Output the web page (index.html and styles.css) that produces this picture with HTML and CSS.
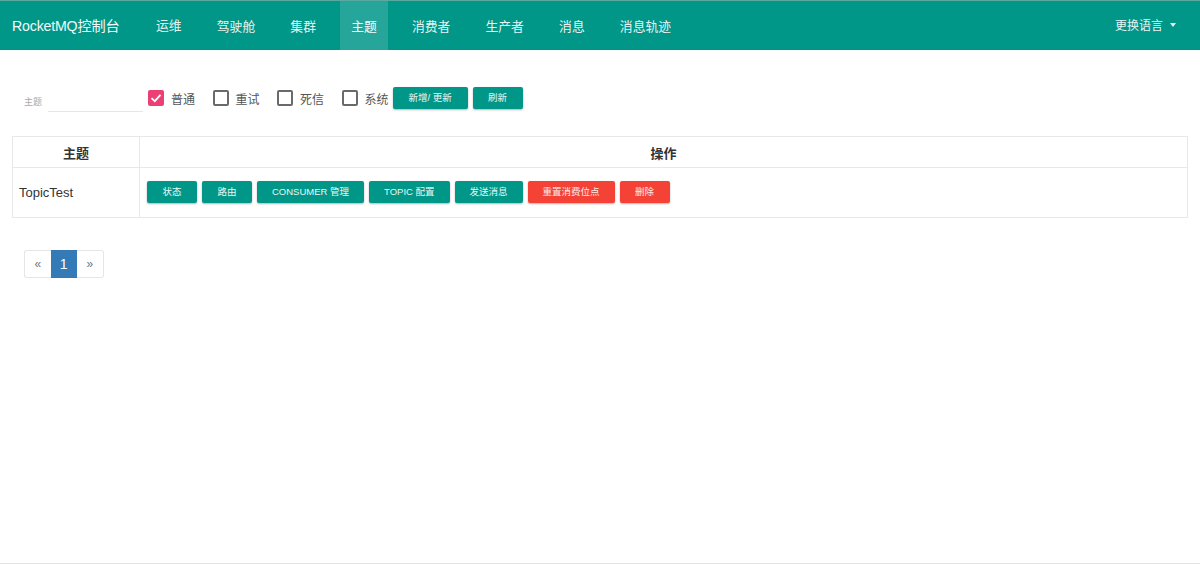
FILE: index.html
```html
<!DOCTYPE html>
<html lang="zh">
<head>
<meta charset="utf-8">
<title>RocketMQ控制台</title>
<link rel="stylesheet" href="styles.css">
</head>
<body>
<div class="page">
  <nav class="navbar">
    <div class="brand">RocketMQ控制台</div>
    <ul class="nav">
      <li class="nav-item">运维</li>
      <li class="nav-item">驾驶舱</li>
      <li class="nav-item">集群</li>
      <li class="nav-item active">主题</li>
      <li class="nav-item">消费者</li>
      <li class="nav-item">生产者</li>
      <li class="nav-item">消息</li>
      <li class="nav-item">消息轨迹</li>
    </ul>
    <div class="lang">更换语言 <span class="caret"></span></div>
  </nav>

  <main class="content">
    <div class="filter">
      <div class="field">
        <span class="field-label">主题</span>
        <span class="field-input"></span>
      </div>
      <label class="check"><span class="box checked"><svg viewBox="0 0 16 16" width="16" height="16"><path d="M3.5 8.2 L6.8 11.2 L12.5 4.8" fill="none" stroke="#fff" stroke-width="1.8"/></svg></span><span class="check-text">普通</span></label>
      <label class="check"><span class="box"></span><span class="check-text">重试</span></label>
      <label class="check"><span class="box"></span><span class="check-text">死信</span></label>
      <label class="check"><span class="box"></span><span class="check-text">系统</span></label>
      <button class="btn btn-form wide">新增/ 更新</button>
      <button class="btn btn-form">刷新</button>
    </div>

    <table class="grid">
      <thead>
        <tr><th class="col-topic">主题</th><th>操作</th></tr>
      </thead>
      <tbody>
        <tr>
          <td class="topic">TopicTest</td>
          <td>
            <div class="actions">
              <button class="btn">状态</button>
              <button class="btn">路由</button>
              <button class="btn">CONSUMER 管理</button>
              <button class="btn">TOPIC 配置</button>
              <button class="btn">发送消息</button>
              <button class="btn btn-red">重置消费位点</button>
              <button class="btn btn-red">删除</button>
            </div>
          </td>
        </tr>
      </tbody>
    </table>

    <ul class="pager">
      <li class="pg">«</li>
      <li class="pg current">1</li>
      <li class="pg">»</li>
    </ul>
  </main>
</div>
</body>
</html>
```

FILE: styles.css
```css
* { box-sizing: border-box; }
html, body { margin: 0; padding: 0; background: #fff; }
body {
  font-family: "Liberation Sans", "Noto Sans CJK SC", Arial, sans-serif;
  font-size: 13px;
  color: #333;
}
.page {
  min-height: 564px;
  border-bottom: 1px solid #e2e2e2;
}
.navbar {
  height: 50px;
  background: #009688;
  border-top: 1px solid #5aa9a1;
  display: flex;
  align-items: stretch;
  color: #e8f5f3;
}
.brand {
  display: flex;
  align-items: center;
  padding-left: 12px;
  padding-bottom: 2px;
  width: 145px;
  font-size: 14.2px;
  color: #f2faf9;
  letter-spacing: -0.2px;
}
.nav {
  list-style: none;
  margin: 0;
  padding: 0;
  display: flex;
  flex: 1;
}
.nav-item {
  display: flex;
  align-items: center;
  padding: 0 11px 1px;
  margin-right: 13.2px;
  font-size: 12.8px;
  color: #e6f4f2;
}
.nav-item:first-child { padding-bottom: 3px; }
.nav-item.active {
  background: #26a69a;
  color: #f4fbfa;
}
.lang {
  display: flex;
  align-items: center;
  padding-right: 24px;
  padding-bottom: 2px;
  font-size: 12px;
  color: #e6f4f2;
}
.caret {
  display: inline-block;
  width: 0; height: 0;
  margin-left: 7px;
  border-left: 3px solid transparent;
  border-right: 3px solid transparent;
  border-top: 4px solid #e6f4f2;
}
.content {
  padding: 36px 12px 0;
}
.filter {
  display: flex;
  align-items: center;
  height: 24px;
  padding-left: 12px;
  margin-bottom: 26px;
}
.field {
  display: flex;
  align-items: flex-end;
  height: 24px;
  margin-right: 5px;
}
.field-label {
  font-size: 9px;
  color: #aaa;
  margin-right: 6px;
  padding-bottom: 2px;
}
.field-input {
  width: 95px;
  height: 1px;
  background: #e6e6e6;
  margin-bottom: -2px;
}
.check {
  display: flex;
  align-items: center;
  margin-right: 17.5px;
  color: #555;
}
.check:nth-of-type(4) { margin-right: 0; }
.box {
  width: 16px;
  height: 16px;
  border: 2px solid #6a6a6a;
  border-radius: 2px;
  margin-right: 7px;
  display: flex;
  align-items: center;
  justify-content: center;
}
.box.checked {
  background: #ec3f74;
  border-color: #ec3f74;
}
.box svg { display: block; flex: none; }
.check-text { font-size: 12px; }
.btn {
  font-family: inherit;
  height: 22px;
  padding: 0 15px;
  border: 0;
  border-radius: 2px;
  background: #009688;
  color: #e8f6f4;
  font-size: 9.5px;
  line-height: 22px;
  white-space: nowrap;
  box-shadow: 0 1px 2px rgba(0,0,0,0.3);
}
.btn-red { background: #f44336; color: #fde9e7; }
.btn-form { margin-left: 5px; width: 50px; padding: 0; }
.btn-form.wide { width: 75px; margin-left: 4px; }
.grid {
  width: 100%;
  border-collapse: collapse;
  border: 1px solid #e8e8e8;
}
.grid th, .grid td {
  border: 1px solid #e8e8e8;
}
.grid th {
  height: 31px;
  font-weight: bold;
  font-size: 13px;
  color: #333;
  text-align: center;
}
.col-topic { width: 127px; }
.grid td { height: 50px; padding-bottom: 2px; }
.topic { padding-left: 6px; color: #333; }
.actions {
  display: flex;
  gap: 5px;
  padding-left: 6px;
}
.actions .btn:nth-child(-n+2) { width: 50px; padding: 0; }
.actions .btn:last-child { width: 50px; padding: 0; }
.pager {
  list-style: none;
  margin: 32px 0 0 12px;
  padding: 0;
  display: flex;
}
.pg {
  width: 26.5px;
  height: 28px;
  display: flex;
  align-items: center;
  justify-content: center;
  border: 1px solid #e6e6e6;
  color: #777;
  font-size: 12px;
}
.pg:first-child { border-radius: 3px 0 0 3px; border-right: 0; }
.pg:last-child { border-radius: 0 3px 3px 0; border-left: 0; }
.pg.current {
  background: #337ab7;
  border-color: #337ab7;
  color: #fff;
  font-size: 14px;
}
```
